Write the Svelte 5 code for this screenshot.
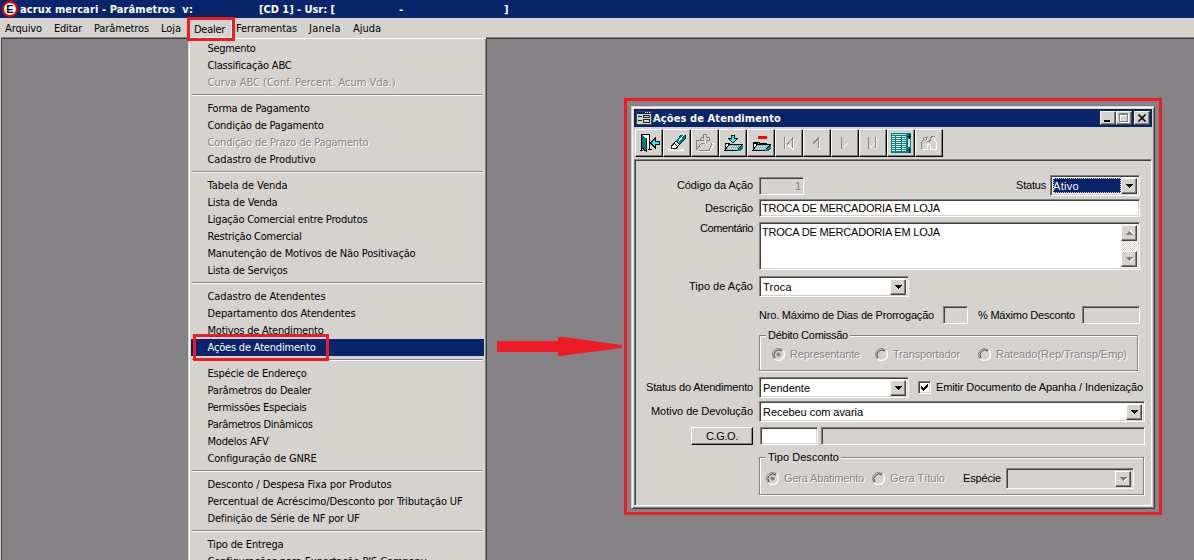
<script lang="ts">
	type Item = { text: string; width: number; disabled?: boolean; selected?: boolean };

	const menus: Item[] = [
		{ text: "Arquivo", width: 37 },
		{ text: "Editar", width: 28 },
		{ text: "Parâmetros", width: 55 },
		{ text: "Loja", width: 20 },
		{ text: "Dealer", width: 31 },
		{ text: "Ferramentas", width: 61 },
		{ text: "Janela", width: 32 },
		{ text: "Ajuda", width: 28 },
	];

	const groups: Item[][] = [
		[
			{ text: "Segmento", width: 48 },
			{ text: "Classificação ABC", width: 84 },
			{ text: "Curva ABC (Conf. Percent. Acum Vda.)", width: 188, disabled: true },
		],
		[
			{ text: "Forma de Pagamento", width: 102 },
			{ text: "Condição de Pagamento", width: 116 },
			{ text: "Condição de Prazo de Pagamento", width: 161, disabled: true },
			{ text: "Cadastro de Produtivo", width: 108 },
		],
		[
			{ text: "Tabela de Venda", width: 80 },
			{ text: "Lista de Venda", width: 70 },
			{ text: "Ligação Comercial entre Produtos", width: 160 },
			{ text: "Restrição Comercial", width: 94 },
			{ text: "Manutenção de Motivos de Não Positivação", width: 208 },
			{ text: "Lista de Serviços", width: 80 },
		],
		[
			{ text: "Cadastro de Atendentes", width: 118 },
			{ text: "Departamento dos Atendentes", width: 148 },
			{ text: "Motivos de Atendimento", width: 116 },
			{ text: "Ações de Atendimento", width: 108, selected: true },
		],
		[
			{ text: "Espécie de Endereço", width: 99 },
			{ text: "Parâmetros do Dealer", width: 104 },
			{ text: "Permissões Especiais", width: 99 },
			{ text: "Parâmetros Dinâmicos", width: 105 },
			{ text: "Modelos AFV", width: 61 },
			{ text: "Configuração de GNRE", width: 109 },
		],
		[
			{ text: "Desconto / Despesa Fixa por Produtos", width: 184 },
			{ text: "Percentual de Acréscimo/Desconto por Tributação UF", width: 255 },
			{ text: "Definição de Série de NF por UF", width: 152 },
		],
		[
			{ text: "Tipo de Entrega", width: 76 },
			{ text: "Configurações para Exportação PIS Company", width: 219 },
		],
	];

	const tools = ["exit", "erase", "open", "save", "remove", "first", "prev", "next", "last", "grid", "find"];

	// Spread the letters so a label takes the given width
	function fit(node: HTMLElement, width: number) {
		const natural = node.getBoundingClientRect().width;
		const count = (node.textContent || "").length;
		node.style.letterSpacing = `${(width - natural) / count}px`;
	}
</script>

{#snippet label(text: string, width: number)}
	<span class="text" use:fit={width}>{text}</span>
{/snippet}

{#snippet arrow()}
	<span class="drop">
		<svg width="7" height="4" viewBox="0 0 7 4"><path d="M0 0h7v1h-1v1h-1v1h-1v1h-1v-1h-1v-1h-1v-1h-1z" /></svg>
	</span>
{/snippet}

{#snippet radio(checked: boolean)}
	<svg class="radio" width="13" height="13" viewBox="0 0 13 13">
		<path d="M2.300 10.700A5.900 5.900 0 0 1 10.700 2.300" stroke="#848284" />
		<path d="M3 10A5 5 0 0 1 10 3" stroke="#424142" />
		<path d="M10.700 2.300A5.900 5.900 0 0 1 2.300 10.700" stroke="#fff" stroke-width="1.300" />
		{#if checked}
			<circle cx="6.5" cy="6.5" r="2" fill="#848284" />
		{/if}
	</svg>
{/snippet}

<div class="app">
	<div class="titlebar">
		<span class="logo">E</span>
		<span class="t-name">{@render label("acrux mercari - Parâmetros  v:", 173)}</span>
		<span class="t-user">{@render label("[CD 1] - Usr: [", 76)}</span>
		<span class="t-dash">-</span>
		<span>]</span>
	</div>

	<div class="menubar">
		{#each menus as menu}
			<span class="menu" class:open={menu.text === "Dealer"}>{@render label(menu.text, menu.width)}</span>
		{/each}
	</div>

	<div class="desktop"></div>

	<div class="dropdown">
		{#each groups as group, i}
			{#if i > 0}
				<div class="separator"></div>
			{/if}
			{#each group as item}
				<div class="item" class:disabled={item.disabled} class:selected={item.selected}>
					{@render label(item.text, item.width)}
				</div>
			{/each}
		{/each}
	</div>

	<div class="mark mark-menu"></div>
	<div class="mark mark-item"></div>
	<svg class="pointer" width="127" height="22" viewBox="0 0 127 22">
		<path d="M0 5H61V1H66L125 9V12L66 19.500L61 20.500V16H0Z" fill="#ed1c24" />
	</svg>
	<div class="mark mark-window"></div>

	<div class="window">
		<div class="caption">
			<svg class="form-icon" width="16" height="14" viewBox="0 0 16 14" shape-rendering="crispEdges">
				<path d="M0 0h16v14H0z" fill="#424142" />
				<path d="M1 1h14v2H1z" fill="#08246b" />
				<path d="M9 1h1v1H9zM11 1h1v1h-1zM13 1h1v1h-1z" fill="#fff" />
				<path d="M1 3h14v10H1z" fill="#d6d3ce" />
				<path d="M2 5h4v1H2zM2 9h4v1H2zM7 4h6v1H7zM7 6h6v1H7zM7 4h1v3H7zM13 4h1v3h-1zM7 8h7v1H7zM7 11h7v1H7zM7 8h1v4H7zM13 8h1v4h-1z" fill="#222" />
			</svg>
			<span class="caption-text">{@render label("Ações de Atendimento", 128)}</span>
			<span class="winbtn">
				<svg width="14" height="12" viewBox="0 0 14 12" shape-rendering="crispEdges"><path d="M3 8h6v2H3z" /></svg>
			</span>
			<span class="winbtn">
				<svg width="14" height="12" viewBox="0 0 14 12" shape-rendering="crispEdges">
					<path d="M3 2h9v9H3zM4 4v6h7V4z" fill="#fff" fill-rule="evenodd" />
					<path d="M2 1h9v9H2zM3 3v6h7V3z" fill="#848284" fill-rule="evenodd" />
				</svg>
			</span>
			<span class="winbtn close">
				<svg width="14" height="12" viewBox="0 0 14 12"><path d="M3.5 2.500L10.500 9.500M10.500 2.500L3.5 9.500" stroke="#000" stroke-width="1.7" /></svg>
			</span>
		</div>

		<div class="toolbar">
			{#each tools as tool}
				<span class="tool">
					<svg width="28" height="28" viewBox="0 0 28 28" shape-rendering="crispEdges">
						{#if tool === "exit"}
							<path d="M6 5h8v16H6z" fill="#fff" />
							<path d="M4.500 21.500h3M6.500 22V5.500h8V21M13 20.500h4" stroke="#000" fill="none" />
							<path d="M7 6l4 3v13l-4-3z" fill="#008284" />
							<path d="M11.500 9v14M7 19l4 3" stroke="#000" />
							<path d="M15.500 14L20 9.5v3h4v3h-4v3z" fill="#00ffff" stroke="#000" />
						{:else if tool === "erase"}
							<path d="M5 20h5v1H5zM7 21h14v1H7zM18 20h3v1h-3z" fill="#fff" />
							<path d="M8.500 17L18 6.500h4v3L13 19.500H8.500z" fill="#fff" stroke="#222" />
							<path d="M13 12l5-6h4v3l-5 6z" fill="#008284" />
							<path d="M15 13l6-7" stroke="#cff" />
							<path d="M11 14l4 4M13 12l4 4" stroke="#000" />
						{:else if tool === "open"}
							<path d="M6.500 22.500h12l5-8h-4M10 14.500h4v-3h4v-3h-3" stroke="#fff" fill="none" />
							<path d="M5.500 21V11.500h3M12.500 10V5.500h3v3h3v2.500h-3v3M9.500 8.500h3M9.500 8.500v3h3M8 21.500h10l3-7M5.500 21l5-7h3" stroke="#848284" fill="none" />
						{:else if tool === "save" || tool === "remove"}
							<path d="M6.500 21.500v-7h4l1 1h7v2" fill="#fff" stroke="#000" />
							<path d="M5.500 21.500h13l5-6H10z" fill="#84c3c6" stroke="#000" />
							<path d="M10 17h10M9 19h10" stroke="#fff" stroke-dasharray="1 1" />
							<path d="M18 22l6-7v4l-3 3z" fill="#008284" />
							{#if tool === "save"}
								<path d="M12.500 6.500h3v3h3L14 14L9.500 9.500h3z" fill="#00ffff" stroke="#000" />
							{:else}
								<path d="M10 6h10v4H10z" fill="#ff0000" stroke="#d6d3ce" />
								<path d="M6 13.500h6l1 1h7" stroke="#000" fill="none" />
							{/if}
						{:else if tool === "first"}
							<path d="M10.500 9v12M18.500 9v12M13 15.500l5 5" stroke="#fff" />
							<path d="M9.500 8v12M12 15.500L18 9M17.500 8v11" stroke="#848284" />
						{:else if tool === "prev"}
							<path d="M10 14.500L16 8.500M15.500 9v10" stroke="#848284" />
							<path d="M16.500 9v12" stroke="#fff" />
						{:else if tool === "next"}
							<path d="M10.500 8v12" stroke="#848284" />
							<path d="M11.500 19.500L17 14" stroke="#fff" />
						{:else if tool === "last"}
							<path d="M9.500 8v12M16.500 8v11" stroke="#848284" />
							<path d="M10.500 19.500L16 14M17.500 8v12" stroke="#fff" />
						{:else if tool === "grid"}
							<path d="M4 4h20v20H4z" fill="#008284" />
							<path d="M5 5h14v1H5z" fill="#b5dcdc" />
							{#each [7, 9, 11, 13, 15, 17, 19, 21] as y}
								<path d="M5 {y}h3v1h-3zM9 {y}h5v1h-5zM15 {y}h4v1h-4z" fill="#fff" />
							{/each}
							<path d="M21 10h2v8h-2z" fill="#d6d3ce" />
							<path d="M20 7h4v1h-4zM21.500 5h1v5h-1zM20 21h4v1h-4zM21.500 19h1v5h-1z" fill="#000" />
						{:else}
							<path d="M7.500 20.500h5v-5h3v5h6v-6l-3-7M12.500 9v4" stroke="#fff" fill="none" />
							<path d="M6.500 20v-6l3-6h3M12.500 8l-2 4M14.500 13l2-6h3M12 12.500h3" stroke="#848284" fill="none" />
						{/if}
					</svg>
				</span>
			{/each}
		</div>

		<div class="form">
			<div class="row r-code">
				<span class="lead">{@render label("Código da Ação", 76)}</span>
				<span class="field off code">1</span>
				<span class="status-label">{@render label("Status", 30)}</span>
				<span class="select status"><span class="value active">{@render label("Ativo", 26)}</span>{@render arrow()}</span>
			</div>
			<div class="row r-desc">
				<span class="lead">{@render label("Descrição", 48)}</span>
				<span class="field wide">{@render label("TROCA DE MERCADORIA EM LOJA", 178)}</span>
			</div>
			<div class="row r-comment">
				<span class="lead">{@render label("Comentário", 53)}</span>
				<span class="field area">
					<span>{@render label("TROCA DE MERCADORIA EM LOJA", 178)}</span>
					<span class="scroll"><span class="up">{@render arrow()}</span><span>{@render arrow()}</span></span>
				</span>
			</div>
			<div class="row r-type">
				<span class="lead">{@render label("Tipo de Ação", 64)}</span>
				<span class="select mid"><span class="value">{@render label("Troca", 29)}</span>{@render arrow()}</span>
			</div>
			<div class="row r-max">
				<span class="lead"></span>
				{@render label("Nro. Máximo de Dias de Prorrogação", 175)}
				<span class="field off days"></span>
				{@render label("% Máximo Desconto", 97)}
				<span class="field off percent"></span>
			</div>
			<div class="group g-debit">
				<span class="legend">{@render label("Débito Comissão", 80)}</span>
				{@render radio(true)}
				<span class="opt o1">{@render label("Representante", 70)}</span>
				{@render radio(false)}
				<span class="opt o2">{@render label("Transportador", 67)}</span>
				{@render radio(false)}
				<span class="opt">{@render label("Rateado(Rep/Transp/Emp)", 131)}</span>
			</div>
			<div class="row r-state">
				<span class="lead">{@render label("Status do Atendimento", 107)}</span>
				<span class="select mid"><span class="value">{@render label("Pendente", 47)}</span>{@render arrow()}</span>
				<span class="check">
					<svg width="9" height="9" viewBox="0 0 9 9" shape-rendering="crispEdges"><path d="M1 3h1v1h1v1h1V4h1V3h1V2h1V1h1v3H7v1H6v1H5v1H4v1H3V7H2V6H1z" /></svg>
				</span>
				{@render label("Emitir Documento de Apanha / Indenização", 207)}
			</div>
			<div class="row r-reason">
				<span class="lead">{@render label("Motivo de Devolução", 102)}</span>
				<span class="select full"><span class="value">{@render label("Recebeu com avaria", 100)}</span>{@render arrow()}</span>
			</div>
			<div class="row r-cgo">
				<button class="cgo">{@render label("C.G.O.", 32)}</button>
				<span class="field cgo-code"></span>
				<span class="field off cgo-name"></span>
			</div>
			<div class="group g-discount">
				<span class="legend">{@render label("Tipo Desconto", 71)}</span>
				{@render radio(true)}
				<span class="opt o3">{@render label("Gera Abatimento", 80)}</span>
				{@render radio(false)}
				<span class="opt o4">{@render label("Gera Título", 55)}</span>
				{@render label("Espécie", 38)}
				<span class="select kind off"><span class="value"></span>{@render arrow()}</span>
			</div>
		</div>
	</div>
</div>

<style>
	:global(body) {
		margin: 0;
		background: #848284;
		overflow: hidden;
	}

	.app {
		position: relative;
		width: 1194px;
		height: 560px;
		overflow: hidden;
		display: flex;
		flex-direction: column;
		background: #d6d3ce;
		color: #000;
		font: 11px/13px "DejaVu Sans Condensed", "DejaVu Sans", sans-serif;
	}

	.app * {
		box-sizing: border-box;
	}

	svg {
		display: block;
		flex: none;
	}

	.text {
		display: inline-block;
		white-space: pre;
		flex: none;
	}

	.titlebar {
		flex: none;
		height: 18px;
		display: flex;
		align-items: center;
		background: #08246b;
		color: #fff;
		font-weight: bold;
		padding-left: 2px;
	}

	.logo {
		width: 16px;
		height: 16px;
		border: 2px solid #f00000;
		border-radius: 50%;
		background: #fff;
		color: #000;
		font: bold 11px/12px "Liberation Sans", Arial, sans-serif;
		text-align: center;
	}

	.t-name {
		width: 239px;
		margin-left: 2px;
	}

	.t-user {
		width: 140px;
	}

	.t-dash {
		width: 105px;
	}

	.menubar {
		flex: none;
		height: 20px;
		display: flex;
		align-items: center;
		gap: 12px;
		padding-left: 5px;
	}

	.menu.open {
		position: relative;
		top: 1px;
		left: 1px;
	}

	.desktop {
		flex: 1;
		margin-left: 1px;
		background: #848284;
		border-top: 1px solid #424142;
		border-left: 1px solid #424142;
		box-shadow: 0 -1px #848284;
	}

	.dropdown {
		position: absolute;
		left: 188px;
		top: 37px;
		width: 299px;
		height: 540px;
		padding: 1px 2px 0 1px;
		background: #d6d3ce;
		border: 1px solid #d6d3ce;
		border-right-color: #424142;
		box-shadow: inset 1px 1px #fff, inset -1px 0 #848284;
	}

	.item {
		height: 17px;
		margin-left: 1px;
		padding: 2px 0 0 16.5px;
	}

	.item:first-child {
		margin-top: 1px;
	}

	.disabled {
		color: #848284;
		text-shadow: 1px 1px #fff;
	}

	.selected {
		background: #08246b;
		color: #fff;
	}

	.separator {
		height: 2px;
		margin: 3px 1px 4px 2px;
		border-top: 1px solid #848284;
		border-bottom: 1px solid #fff;
	}

	.mark {
		position: absolute;
		border: 3px solid #ed1c24;
	}

	.mark-menu {
		left: 187px;
		top: 17px;
		width: 48px;
		height: 24px;
		box-shadow: inset -1px -1px #fff;
	}

	.mark-item {
		left: 193px;
		top: 334px;
		width: 136px;
		height: 27px;
	}

	.mark-window {
		left: 624px;
		top: 98px;
		width: 538px;
		height: 417px;
	}

	.pointer {
		position: absolute;
		left: 497px;
		top: 336px;
	}

	.window {
		position: absolute;
		left: 631px;
		top: 106px;
		width: 524px;
		height: 403px;
		padding: 1px;
		background: #d6d3ce;
		border: 1px solid #d6d3ce;
		border-right-color: #424142;
		border-bottom-color: #424142;
		box-shadow: inset 1px 1px #fff, inset -1px -1px #848284;
		display: flex;
		flex-direction: column;
	}

	.caption {
		flex: none;
		height: 18px;
		margin: 1px 1px 0;
		padding: 0 2px;
		display: flex;
		align-items: center;
		background: #08246b;
		color: #fff;
		font-weight: bold;
	}

	.caption-text {
		flex: 1;
		margin-left: 1px;
	}

	.winbtn {
		width: 16px;
		height: 14px;
		background: #d6d3ce;
		border: 1px solid #fff;
		border-right-color: #424142;
		border-bottom-color: #424142;
		box-shadow: inset -1px -1px #848284;
	}

	.close {
		margin-left: 2px;
	}

	.toolbar {
		flex: none;
		height: 32px;
		display: flex;
		padding: 2px 0 0 2px;
	}

	.tool {
		width: 28px;
		height: 28px;
		border: 1px solid #fff;
		border-right-color: #000;
		border-bottom-color: #000;
		box-shadow: inset -1px -1px #848284;
	}

	.tool svg {
		margin: -1px;
	}

	.form {
		flex: 1;
		margin: 0 1px 1px;
		border: 1px solid #848284;
		border-right-color: #fff;
		border-bottom-color: #fff;
		box-shadow: inset 1px 1px #424142;
		padding: 16px 0 0 1px;
		font: 11px/13px "Liberation Sans", Arial, sans-serif;
	}

	.row {
		display: flex;
		align-items: center;
	}

	.lead {
		width: 123px;
		flex: none;
		padding-right: 6px;
		text-align: right;
	}

	.field,
	.select {
		flex: none;
		display: flex;
		background: #fff;
		border: 1px solid #848284;
		border-right-color: #fff;
		border-bottom-color: #fff;
		box-shadow: inset 1px 1px #424142, inset -1px -1px #d6d3ce;
	}

	.field {
		height: 18px;
		padding: 2px;
	}

	.off {
		background: #d6d3ce;
		color: #848284;
	}

	.select {
		height: 21px;
		padding: 2px;
	}

	.value {
		flex: 1;
		padding: 2px 0 0 1px;
	}

	.active {
		padding-left: 0;
		background: #08246b;
		color: #fff;
		outline: 1px dotted #d6d3ce;
		outline-offset: -1px;
	}

	.drop {
		width: 16px;
		height: 16px;
		display: flex;
		align-items: center;
		justify-content: center;
		background: #d6d3ce;
		border: 1px solid #fff;
		border-right-color: #424142;
		border-bottom-color: #424142;
		box-shadow: inset -1px -1px #848284;
	}

	.code {
		width: 45px;
		justify-content: flex-end;
	}

	.status-label {
		width: 246px;
		padding-right: 4px;
		text-align: right;
	}

	.status {
		width: 90px;
	}

	.r-code {
		height: 21px;
		margin-top: -1px;
	}

	.r-desc {
		margin-top: 3px;
	}

	.wide,
	.area {
		width: 381px;
	}

	.r-comment {
		margin-top: 5px;
		align-items: flex-start;
	}

	.area {
		height: 48px;
		justify-content: space-between;
	}

	.area > span:first-child {
		padding-top: 1px;
	}

	.scroll {
		width: 16px;
		display: flex;
		flex-direction: column;
		justify-content: space-between;
		background: repeating-conic-gradient(#fff 0 25%, #d6d3ce 0 50%) 0 0 / 2px 2px;
	}

	.scroll svg,
	.kind svg {
		fill: #848284;
		filter: drop-shadow(1px 1px #fff);
	}

	.up svg {
		transform: scaleY(-1);
	}

	.r-type {
		margin-top: 6px;
	}

	.mid {
		width: 150px;
	}

	.r-max {
		margin-top: 9px;
	}

	.days {
		width: 25px;
		margin: 0 10px 0 9px;
	}

	.percent {
		width: 58px;
		margin-left: 7px;
	}

	.group {
		position: relative;
		margin-left: 123px;
		border: 1px solid #848284;
		box-shadow: 1px 1px #fff, inset 1px 1px #fff;
		display: flex;
		align-items: center;
	}

	.legend {
		position: absolute;
		left: 6px;
		top: -7px;
		padding: 0 2px;
		background: #d6d3ce;
	}

	.g-debit {
		width: 379px;
		height: 36px;
		margin-top: 11px;
		padding: 3px 0 0 12px;
	}

	.radio {
		fill: none;
	}

	.opt {
		margin-left: 5px;
		color: #848284;
		text-shadow: 1px 1px #fff;
	}

	.o1 {
		margin-right: 15px;
	}

	.o2 {
		margin-right: 18px;
	}

	.r-state {
		margin-top: 6px;
	}

	.check {
		width: 13px;
		height: 13px;
		margin: 0 5px 0 9px;
		padding: 1px;
		background: #fff;
		border: 1px solid #848284;
		border-right-color: #fff;
		border-bottom-color: #fff;
		box-shadow: inset 1px 1px #424142, inset -1px -1px #d6d3ce;
	}

	.r-reason {
		margin-top: 3px;
	}

	.full {
		width: 386px;
	}

	.r-cgo {
		margin-top: 5px;
	}

	.cgo {
		width: 62px;
		height: 18px;
		margin: 0 7px 0 55px;
		padding: 0;
		font: inherit;
		color: inherit;
		background: #d6d3ce;
		border: 1px solid #fff;
		border-right-color: #000;
		border-bottom-color: #000;
		box-shadow: inset -1px -1px #848284;
	}

	.cgo-code {
		width: 58px;
		margin-right: 3px;
	}

	.cgo-name {
		width: 324px;
	}

	.g-discount {
		width: 385px;
		height: 38px;
		margin-top: 12px;
		padding: 4px 0 0 6px;
	}

	.o3 {
		margin-right: 8px;
	}

	.o4 {
		margin-right: 18px;
	}

	.kind {
		width: 128px;
		margin-left: 5px;
	}
</style>
